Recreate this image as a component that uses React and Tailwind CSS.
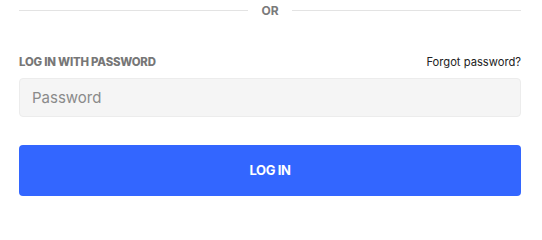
export default function App() {
  return (
    <div className="w-[542px] h-[211px] bg-white font-['Inter',sans-serif]">
      <div className="w-[502px] ml-[19px] pt-[3px]">
        <div className="flex items-center gap-[10px] h-[15px]">
          <div className="flex-1 h-px bg-[#e3e3e3]" />
          <span className="text-[12px] font-bold text-[#7a7a7a] px-[3px] leading-none">OR</span>
          <div className="flex-1 h-px bg-[#e3e3e3]" />
        </div>

        <div className="flex justify-between items-end mt-[37px]">
          <span className="text-[11.4px] font-extrabold text-[#777] tracking-[-0.2px] leading-[14px]">LOG IN WITH PASSWORD</span>
          <a href="#" className="text-[11.2px] text-[#222] leading-[14px]">Forgot password?</a>
        </div>

        <input
          type="password"
          placeholder="Password"
          className="mt-[9px] w-full h-[39px] px-[12px] rounded-[4px] border border-[#ececec] bg-[#f5f5f5] text-[15px] placeholder:text-[#8a8a8a] outline-none"
        />

        <button className="mt-[28px] w-full h-[51px] rounded-[4px] bg-[#3366ff] text-white text-[13px] font-bold tracking-[-0.4px]">
          LOG IN
        </button>
      </div>
    </div>
  );
}
